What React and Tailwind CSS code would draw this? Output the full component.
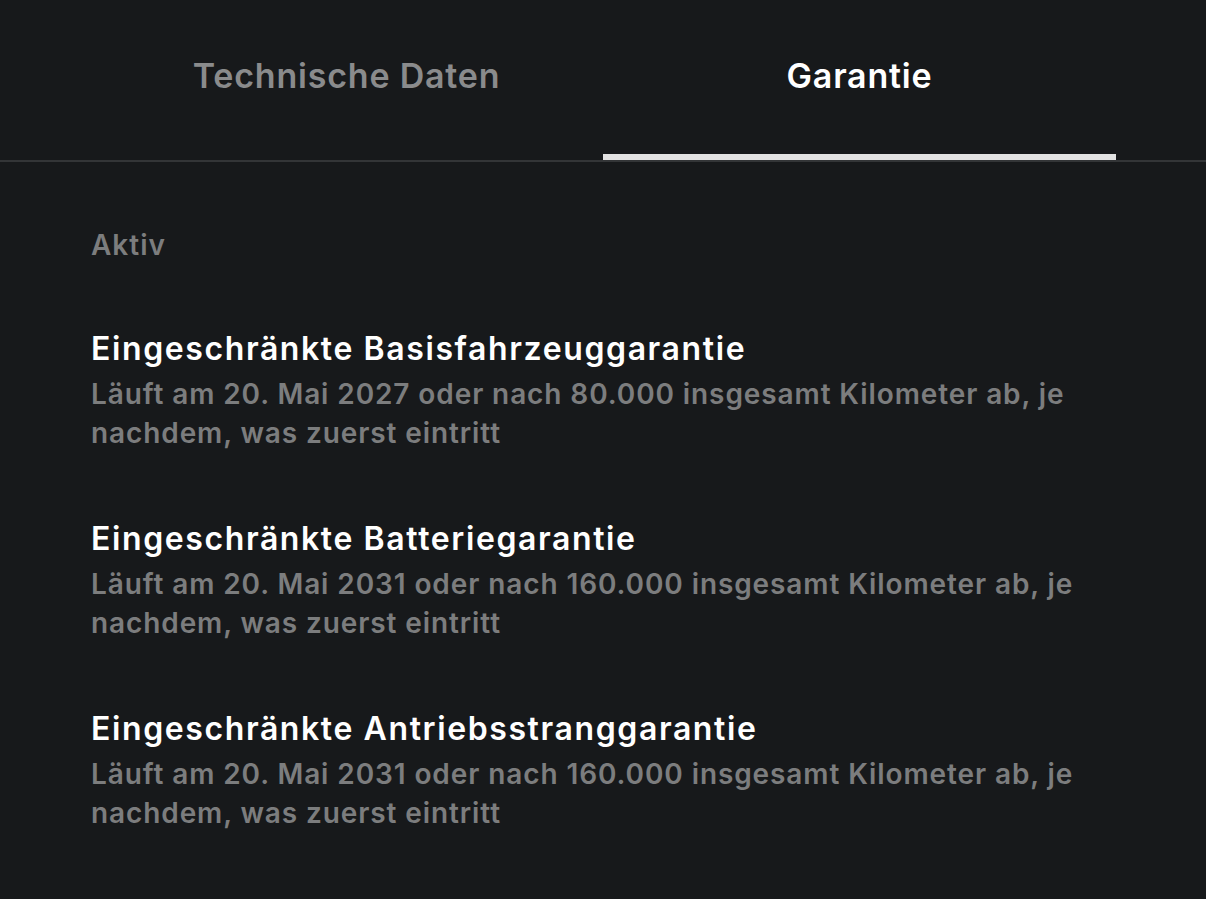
export default function App() {
  const items = [
    {
      title: "Eingeschränkte Basisfahrzeuggarantie",
      desc: "Läuft am 20. Mai 2027 oder nach 80.000 insgesamt Kilometer ab, je nachdem, was zuerst eintritt",
    },
    {
      title: "Eingeschränkte Batteriegarantie",
      desc: "Läuft am 20. Mai 2031 oder nach 160.000 insgesamt Kilometer ab, je nachdem, was zuerst eintritt",
    },
    {
      title: "Eingeschränkte Antriebsstranggarantie",
      desc: "Läuft am 20. Mai 2031 oder nach 160.000 insgesamt Kilometer ab, je nachdem, was zuerst eintritt",
    },
  ];
  return (
    <div
      className="w-[1206px] h-[899px] bg-[#17191b] overflow-hidden"
      style={{ fontFamily: "Inter, 'Liberation Sans', sans-serif" }}
    >
      <div className="border-b-2 border-[#333537]">
        <div className="flex px-[90px]">
          <div className="flex-1 h-[160px] flex items-start justify-center pt-[54px] text-[34px] font-semibold tracking-[0.8px] text-[#8a8b8c] leading-[44px]">
            Technische Daten
          </div>
          <div className="flex-1 h-[160px] flex flex-col items-center justify-between pt-[54px]">
            <span className="text-[34px] font-semibold tracking-[0.8px] text-white leading-[44px]">Garantie</span>
            <div className="w-full h-[6px] bg-[#e2e2e2]" />
          </div>
        </div>
      </div>
      <div className="px-[91px] pt-[65px]">
        <div className="text-[28px] font-semibold tracking-[1px] text-[#7c7d7e] leading-[36px]">Aktiv</div>
        <div className="flex flex-col gap-[65px] mt-[65px]">
          {items.map((it) => (
            <div key={it.title} className="max-w-[1000px]">
              <div className="text-[32px] font-semibold tracking-[1.6px] text-white leading-[42px]">{it.title}</div>
              <div className="text-[28px] font-semibold tracking-[0.9px] text-[#7c7d7e] leading-[39px] mt-[5px]">{it.desc}</div>
            </div>
          ))}
        </div>
      </div>
    </div>
  );
}
